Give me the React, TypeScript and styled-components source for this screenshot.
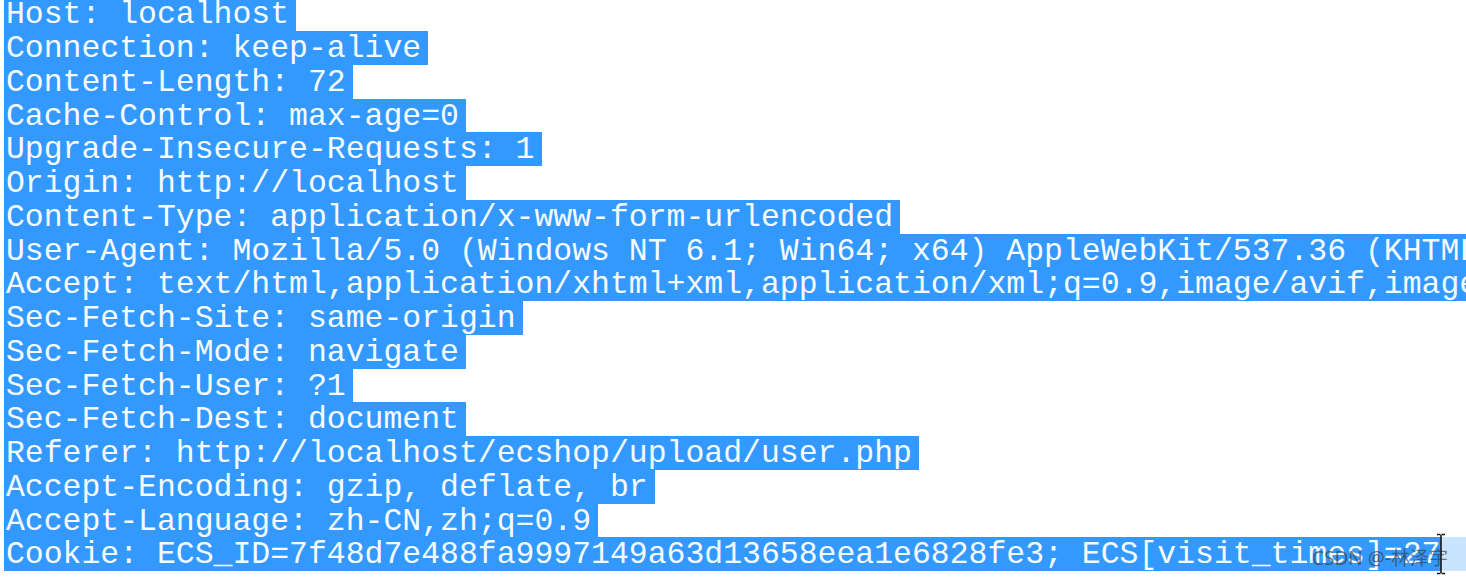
import React from "react";
import styled, { createGlobalStyle } from "styled-components";

const Global = createGlobalStyle`
  html, body { margin: 0; padding: 0; background: #ffffff; }
  body { width: 1466px; height: 580px; overflow: hidden; }
`;

const Page = styled.div`
  position: relative;
  width: 1466px;
  height: 580px;
  overflow: hidden;
  background: #ffffff;
`;

const Lines = styled.div`
  display: flex;
  flex-direction: column;
  margin-top: -2.75px;
  padding-left: 4px;
  font-family: "Liberation Mono", "Courier New", monospace;
  font-size: 31.46px;
  line-height: 31.75px;
  white-space: pre;
`;

const Row = styled.div<{ $tail?: boolean }>`
  display: flex;
  height: 33.75px;
  background: ${(p) => (p.$tail ? "#c9e4fc" : "transparent")};
`;

const Sel = styled.span<{ $full?: boolean }>`
  flex: none;
  display: inline-block;
  box-sizing: border-box;
  height: 33.75px;
  padding: 2px ${(p) => (p.$full ? "0" : "7px")} 0 2px;
  background: #3399ff;
  color: #f6fbff;
`;

const Watermark = styled.div`
  position: absolute;
  left: 1312px;
  top: 546px;
  font-family: "Noto Sans", "Noto Sans CJK SC", sans-serif;
  font-size: 19px;
  line-height: 24px;
  color: rgba(60, 60, 60, 0.68);
  white-space: nowrap;
`;

const Caret = styled.svg`
  position: absolute;
  left: 1435px;
  top: 533px;
`;

const lines = [
  "Host: localhost",
  "Connection: keep-alive",
  "Content-Length: 72",
  "Cache-Control: max-age=0",
  "Upgrade-Insecure-Requests: 1",
  "Origin: http://localhost",
  "Content-Type: application/x-www-form-urlencoded",
  "User-Agent: Mozilla/5.0 (Windows NT 6.1; Win64; x64) AppleWebKit/537.36 (KHTML, like Gecko) Chrome/91.0.4472.124 Safari/537.36",
  "Accept: text/html,application/xhtml+xml,application/xml;q=0.9,image/avif,image/webp,image/apng,*/*;q=0.8",
  "Sec-Fetch-Site: same-origin",
  "Sec-Fetch-Mode: navigate",
  "Sec-Fetch-User: ?1",
  "Sec-Fetch-Dest: document",
  "Referer: http://localhost/ecshop/upload/user.php",
  "Accept-Encoding: gzip, deflate, br",
  "Accept-Language: zh-CN,zh;q=0.9",
];

export default function App() {
  return (
    <Page>
      <Global />
      <Lines>
        {lines.map((l) => (
          <Row key={l}>
            <Sel>{l}</Sel>
          </Row>
        ))}
        <Row $tail>
          <Sel $full>{"Cookie: ECS_ID=7f48d7e488fa9997149a63d13658eea1e6828fe3; ECS[visit_times]=27"}</Sel>
        </Row>
      </Lines>
      <Watermark>CSDN @-林泽宇</Watermark>
      <Caret width="12" height="42" viewBox="0 0 12 42">
        <path d="M2 1.5h3.5M6.5 1.5h3.5M6 2v38M2 40.5h3.5M6.5 40.5h3.5" stroke="#1a1a1a" strokeWidth="1.6" fill="none" />
      </Caret>
    </Page>
  );
}
